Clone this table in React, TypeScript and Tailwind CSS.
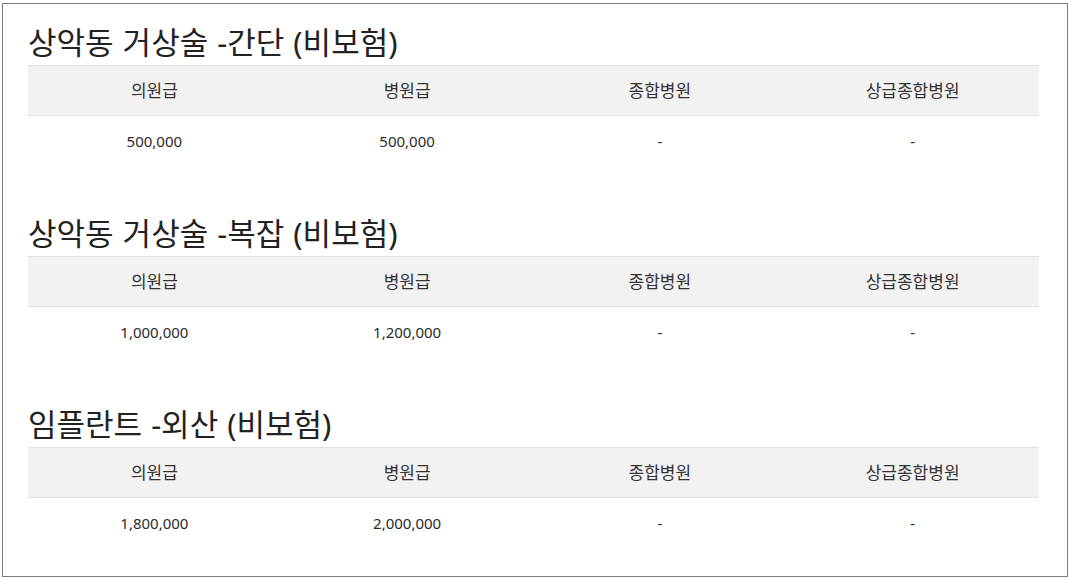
import React from "react";

const sections = [
  { title: "상악동 거상술 -간단 (비보험)", values: ["500,000", "500,000", "-", "-"] },
  { title: "상악동 거상술 -복잡 (비보험)", values: ["1,000,000", "1,200,000", "-", "-"] },
  { title: "임플란트 -외산 (비보험)", values: ["1,800,000", "2,000,000", "-", "-"] },
];

const headers = ["의원급", "병원급", "종합병원", "상급종합병원"];

export default function App() {
  return (
    <div
      className="w-[1069px] h-[580px] bg-white pt-[3px] pl-[2px]"
      style={{ fontFamily: '"Noto Sans", "Noto Sans CJK KR", sans-serif' }}
    >
      <div className="w-[1066px] h-[574px] border border-[#7a7a7a] pl-[25px] pr-[27px] pt-[20px]">
        {sections.map((s, i) => (
          <div key={i} className={i > 0 ? "mt-[49px]" : ""}>
            <h2 className="text-[31px] leading-[36px] text-[#222] mb-[5px] font-normal [word-spacing:1px]">
              {s.title}
            </h2>
            <div className="w-[1011px]">
              <div className="grid grid-cols-4 h-[51px] bg-[#f2f2f2] border-t border-b border-[#e2e2e2] text-[17px] text-[#333]">
                {headers.map((h) => (
                  <div key={h} className="flex items-center justify-center">
                    {h}
                  </div>
                ))}
              </div>
              <div className="grid grid-cols-4 h-[50px] text-[15px] text-[#2a2a2a]">
                {s.values.map((v, j) => (
                  <div key={j} className="flex items-center justify-center">
                    {v}
                  </div>
                ))}
              </div>
            </div>
          </div>
        ))}
      </div>
    </div>
  );
}
